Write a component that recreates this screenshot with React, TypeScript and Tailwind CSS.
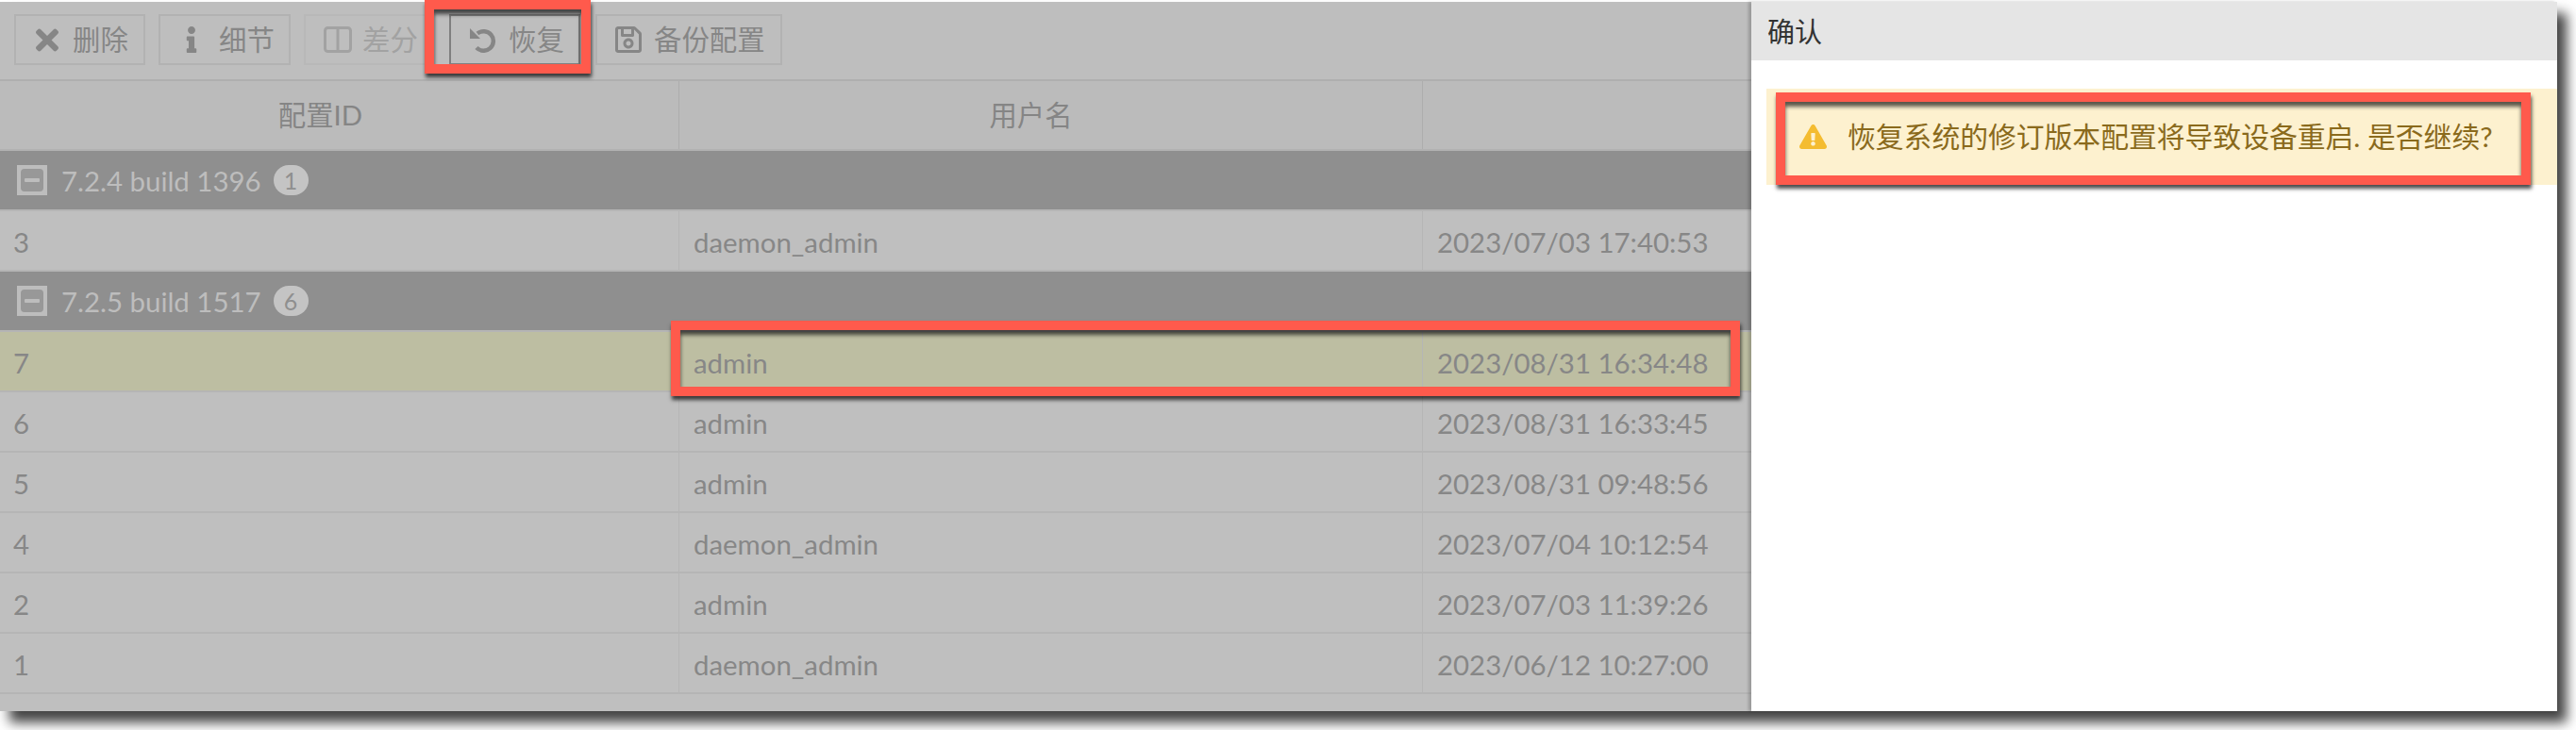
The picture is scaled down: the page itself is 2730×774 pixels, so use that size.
import React from "react";
import { FaTimes, FaInfo, FaRegSave, FaExclamationTriangle } from "react-icons/fa";

const rows1 = [["3", "daemon_admin", "2023/07/03 17:40:53"]];
const rows2 = [
  ["7", "admin", "2023/08/31 16:34:48"],
  ["6", "admin", "2023/08/31 16:33:45"],
  ["5", "admin", "2023/08/31 09:48:56"],
  ["4", "daemon_admin", "2023/07/04 10:12:54"],
  ["2", "admin", "2023/07/03 11:39:26"],
  ["1", "daemon_admin", "2023/06/12 10:27:00"],
];

function Minus() {
  return (
    <svg width="32" height="32" viewBox="0 0 32 32" className="shrink-0">
      <rect width="32" height="32" fill="#bdbdbd" />
      <rect x="4" y="4" width="24" height="24" rx="4" fill="#989898" />
      <rect x="8" y="14" width="16" height="4" rx="1" fill="#bdbdbd" />
    </svg>
  );
}

function Group({ label, count }: { label: string; count: number }) {
  return (
    <div className="h-[64px] shrink-0 border-b-2 border-[#b5b5b5] bg-[#8f8f8f] flex items-center pl-[18px] text-[#bdbdbd]">
      <Minus />
      <span className="ml-[15px] pt-[2px]">{label}</span>
      <span className="ml-[13px] w-[37px] h-[32px] rounded-full bg-[#c4c4c4] text-[#8f8f8f] text-[25px] flex items-center justify-center">
        {count}
      </span>
    </div>
  );
}

function Row({ r, selected }: { r: string[]; selected?: boolean }) {
  return (
    <div
      className={`h-[64px] shrink-0 border-b-2 border-[#b5b5b5] flex items-stretch text-[#878787] ${
        selected ? "bg-[#bdbea2]" : "bg-[#bfbfbf]"
      }`}
    >
      <div className="w-[719px] pl-[14px] pt-[3px] flex items-center">{r[0]}</div>
      <div className="w-[788px] pl-[15px] pt-[3px] flex items-center border-l border-[#b5b5b5]">{r[1]}</div>
      <div className="flex-1 pl-[15px] pt-[3px] flex items-center border-l border-[#b5b5b5]">{r[2]}</div>
    </div>
  );
}

function Btn({
  w,
  pl,
  gap,
  icon,
  label,
  cls,
}: {
  w: string;
  pl: string;
  gap: string;
  icon: React.ReactNode;
  label: string;
  cls: string;
}) {
  return (
    <div className={`h-[54px] flex items-center border-2 ${w} ${pl} ${gap} ${cls}`}>
      {icon}
      <span>{label}</span>
    </div>
  );
}

export default function App() {
  return (
    <div className="relative w-[2730px] h-[774px] overflow-hidden bg-white pt-[2px] font-[Lato,'Noto_Sans_CJK_SC',sans-serif] text-[29.4px] leading-none">
      <div className="w-[2710px] h-[752px] flex shadow-[10px_12px_12px_#444]">
        <div className="w-[1856px] shrink-0 bg-[#bfbfbf] flex flex-col">
          <div className="h-[84px] shrink-0 border-b-2 border-[#afafaf] bg-[#bebebe] pt-[13px] pl-[15px] flex gap-[14px] text-[#868686]">
            <Btn w="w-[139px]" pl="pl-[21px]" gap="gap-[15px]" cls="border-[#b2b2b2]" label="删除" icon={<FaTimes className="w-[24px] h-[35px]" />} />
            <Btn w="w-[140px]" pl="pl-[26px]" gap="gap-[22px]" cls="border-[#b2b2b2]" label="细节" icon={<FaInfo className="w-[14px] h-[28px]" />} />
            <Btn
              w="w-[140px]"
              pl="pl-[19px]"
              gap="gap-[11px]"
              cls="border-[#b8b8b8] text-[#a2a2a2]"
              label="差分"
              icon={
                <svg width="30" height="28" viewBox="0 0 30 28" fill="none" stroke="currentColor" strokeWidth="3">
                  <rect x="1.5" y="1.5" width="27" height="25" rx="3" />
                  <path d="M15 2v24" />
                </svg>
              }
            />
            <Btn
              w="w-[139px]"
              pl="pl-[19px]"
              gap="gap-[13px]"
              cls="border-[#7f7f7f]"
              label="恢复"
              icon={
                <svg width="29" height="27" viewBox="0 0 29 27" fill="none">
                  <path d="M9 6.5A10.3 10.3 0 1 1 8 21.5" stroke="currentColor" strokeWidth="4.5" />
                  <path d="M1 1v11h11z" fill="currentColor" />
                </svg>
              }
            />
            <div className="ml-[2px]">
              <Btn w="w-[198px]" pl="pl-[19px]" gap="gap-[13px]" cls="border-[#b2b2b2]" label="备份配置" icon={<FaRegSave className="w-[28px] h-[32px]" />} />
            </div>
          </div>
          <div className="h-[74px] shrink-0 border-b-2 border-[#b2b2b2] bg-[#bbbbbb] flex items-stretch text-[#858585]">
            <div className="w-[719px] pr-[40px] flex items-center justify-center">配置ID</div>
            <div className="w-[788px] pr-[42px] flex items-center justify-center border-l border-[#adadad]">用户名</div>
            <div className="flex-1 border-l border-[#adadad]" />
          </div>
          <Group label="7.2.4 build 1396" count={1} />
          {rows1.map((r) => (
            <Row key={r[0]} r={r} />
          ))}
          <Group label="7.2.5 build 1517" count={6} />
          {rows2.map((r, i) => (
            <Row key={r[0]} r={r} selected={i === 0} />
          ))}
        </div>
        <div className="flex-1 bg-white flex flex-col shadow-[-3px_0_3px_rgba(0,0,0,0.2)]">
          <div className="h-[62px] shrink-0 bg-[#e5e5e5] pl-[17px] flex items-center text-[#333333] text-[29px]">确认</div>
          <div className="mt-[30px] ml-[16px] h-[102px] bg-[#fdf1cf] flex items-center pl-[35px] text-[#8a6a1c] text-[29.8px]">
            <FaExclamationTriangle className="w-[29px] h-[26px] text-[#f4bc30] shrink-0" />
            <span className="ml-[22px] whitespace-nowrap">恢复系统的修订版本配置将导致设备重启. 是否继续?</span>
          </div>
        </div>
      </div>

      <div className="absolute left-[450px] top-0 w-[176px] h-[78px] border-[10px] border-[#ff5a4c] shadow-[1px_4px_4px_rgba(0,0,0,0.7),inset_0_5px_4px_rgba(0,0,0,0.65)]" />
      <div className="absolute left-[711px] top-[340px] w-[1133px] h-[80px] border-[10px] border-[#ff5a4c] shadow-[1px_4px_4px_rgba(0,0,0,0.7),inset_0_5px_4px_rgba(0,0,0,0.65)]" />
      <div className="absolute left-[1882px] top-[98px] w-[800px] h-[98px] border-[10px] border-[#ff5a4c] shadow-[1px_4px_4px_rgba(0,0,0,0.7),inset_0_5px_4px_rgba(0,0,0,0.65)]" />
    </div>
  );
}
